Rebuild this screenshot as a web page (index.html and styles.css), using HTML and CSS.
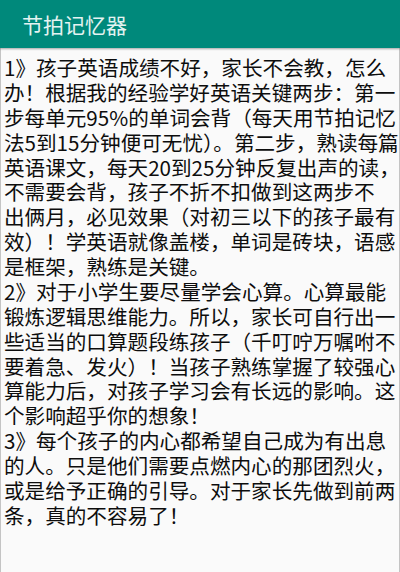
FILE: index.html
```html
<!DOCTYPE html>
<html lang="zh-CN">
<head>
<meta charset="utf-8">
<title>节拍记忆器</title>
<link rel="stylesheet" href="styles.css">
</head>
<body>
<div class="app">
  <header class="appbar">
    <h1 class="title">节拍记忆器</h1>
  </header>
  <main class="content">
    <p class="tip">1》孩子英语成绩不好，家长不会教，怎么<br>办！根据我的经验学好英语关键两步：第一<br>步每单元95%的单词会背（每天用节拍记忆<br>法5到15分钟便可无忧）。第二步，熟读每篇<br>英语课文，每天20到25分钟反复出声的读，<br>不需要会背，孩子不折不扣做到这两步不<br>出俩月，必见效果（对初三以下的孩子最有<br>效）！学英语就像盖楼，单词是砖块，语感<br>是框架，熟练是关键。</p>
    <p class="tip">2》对于小学生要尽量学会心算。心算最能<br>锻炼逻辑思维能力。所以，家长可自行出一<br>些适当的口算题段练孩子（千叮咛万嘱咐不<br>要着急、发火）！当孩子熟练掌握了较强心<br>算能力后，对孩子学习会有长远的影响。这<br>个影响超乎你的想象！</p>
    <p class="tip">3》每个孩子的内心都希望自己成为有出息<br>的人。只是他们需要点燃内心的那团烈火，<br>或是给予正确的引导。对于家长先做到前两<br>条，真的不容易了！</p>
  </main>
</div>
</body>
</html>
```
FILE: styles.css
```css
html, body {
  margin: 0;
  padding: 0;
  background: #fafafa;
}

.app {
  width: 400px;
  height: 572px;
  display: flex;
  flex-direction: column;
  overflow: hidden;
  font-family: "Noto Sans CJK SC", "Noto Sans", sans-serif;
}

.appbar {
  height: 48px;
  flex: none;
  background: #00897b;
  display: flex;
  align-items: center;
  padding-left: 22px;
  box-shadow: 0 1px 2px rgba(0, 0, 0, 0.35);
  position: relative;
  z-index: 1;
}

.title {
  margin: 0;
  font-size: 21px;
  font-weight: normal;
  line-height: 1;
  color: #e4f3f1;
}

.content {
  flex: 1;
  background: #fafafa;
  border-left: 1px solid #c4c4c4;
  border-right: 1px solid #c4c4c4;
  padding: 7px 0 0 3px;
  overflow: hidden;
}

.tip {
  margin: 0;
  font-size: 20.6px;
  line-height: 24.87px;
  color: #0d0d0d;
  white-space: nowrap;
}
```
